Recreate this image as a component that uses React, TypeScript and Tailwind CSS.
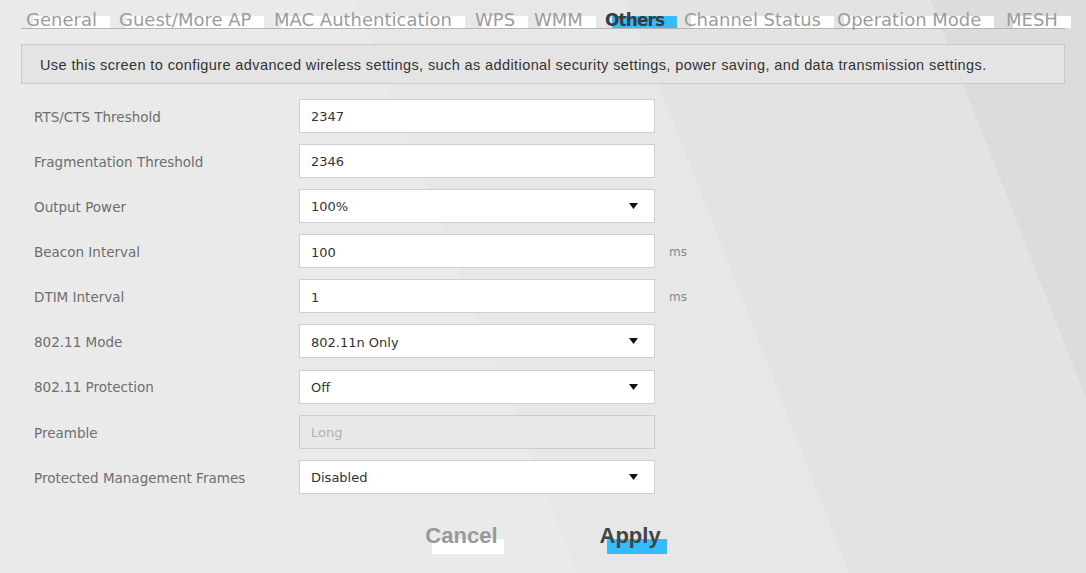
import React from "react";

type Tab = { label: string; w: string; active?: boolean };

const tabs: Tab[] = [
  { label: "General", w: "w-[93px]" },
  { label: "Guest/More AP", w: "w-[155px]" },
  { label: "MAC Authentication", w: "w-[201px]" },
  { label: "WPS", w: "w-[59px]" },
  { label: "WMM", w: "w-[71px]" },
  { label: "Others", w: "w-[79px]", active: true },
  { label: "Channel Status", w: "w-[153px]" },
  { label: "Operation Mode", w: "w-[169px]" },
  { label: "MESH", w: "w-[60px]" },
];

type Row = {
  label: string;
  value: string;
  kind: "input" | "select" | "disabled";
  unit?: string;
};

const rows: Row[] = [
  { label: "RTS/CTS Threshold", value: "2347", kind: "input" },
  { label: "Fragmentation Threshold", value: "2346", kind: "input" },
  { label: "Output Power", value: "100%", kind: "select" },
  { label: "Beacon Interval", value: "100", kind: "input", unit: "ms" },
  { label: "DTIM Interval", value: "1", kind: "input", unit: "ms" },
  { label: "802.11 Mode", value: "802.11n Only", kind: "select" },
  { label: "802.11 Protection", value: "Off", kind: "select" },
  { label: "Preamble", value: "Long", kind: "disabled" },
  { label: "Protected Management Frames", value: "Disabled", kind: "select" },
];

function Arrow() {
  return (
    <svg width="9" height="6" viewBox="0 0 9 6" className="shrink-0">
      <polygon points="0,0 9,0 4.5,6" fill="#111" />
    </svg>
  );
}

export default function App() {
  return (
    <div className="w-[1086px] h-[573px] overflow-hidden bg-[#e8e8e8] bg-[linear-gradient(68.7deg,#eaeaea_538px,#e7e7e7_538px,#e7e7e7_791px,#e3e3e3_791px,#e3e3e3_1075px,#dcdcdc_1075px)] font-['DejaVu_Sans',sans-serif]">
      <div className="px-[21px]">
        {/* Tabs */}
        <div className="flex h-[29px] border-b border-[#b5b5b5] pt-[9px] pl-[5px]">
          {tabs.map((t) => (
            <div key={t.label} className={`${t.w} shrink-0`}>
              <span
                className={
                  t.active
                    ? "relative inline-block text-[17px] leading-[18px] font-bold text-[#3a3a3a] tracking-[-0.9px]"
                    : "relative inline-block text-[18px] leading-[18px] text-[#9c9c9c]"
                }
              >
                <span
                  className={
                    t.active
                      ? "absolute left-[7px] -right-[13px] top-[5px] h-[12px] bg-[#33bcff]"
                      : "absolute left-[7px] -right-[13px] top-[5px] h-[12px] bg-white"
                  }
                />
                <span className="relative whitespace-nowrap">{t.label}</span>
              </span>
            </div>
          ))}
        </div>

        {/* Description */}
        <div className="mt-[15px] h-[40px] border border-[#c9c9c9] bg-[#e4e4e4] flex items-center pl-[18px] pt-[4px]">
          <span className="font-['Liberation_Sans',sans-serif] text-[14.5px] tracking-[0.4px] text-[#333] whitespace-nowrap">
            Use this screen to configure advanced wireless settings, such as additional security settings, power saving, and data transmission settings.
          </span>
        </div>

        {/* Form */}
        <div className="mt-[15px] flex flex-col gap-[11.1px]">
          {rows.map((r) => (
            <div key={r.label} className="flex items-center h-[34px]">
              <div className="w-[278px] shrink-0 pl-[13px] pt-[2px] text-[13.5px] text-[#6e6e6e] whitespace-nowrap">
                {r.label}
              </div>
              <div
                className={
                  r.kind === "disabled"
                    ? "w-[356px] h-[34px] shrink-0 border border-[#cccccc] bg-[#e8e8e8] flex items-center pl-[11px] pr-[16px]"
                    : "w-[356px] h-[34px] shrink-0 border border-[#cfcfcf] bg-white flex items-center pl-[11px] pr-[16px]"
                }
              >
                <span
                  className={
                    r.kind === "disabled"
                      ? "flex-1 pt-[2px] text-[13px] text-[#b0b0b0]"
                      : "flex-1 pt-[2px] text-[13px] text-[#333]"
                  }
                >
                  {r.value}
                </span>
                {r.kind === "select" && <Arrow />}
              </div>
              {r.unit && (
                <span className="ml-[14px] pt-[2px] text-[12px] text-[#888]">{r.unit}</span>
              )}
            </div>
          ))}
        </div>

        {/* Buttons */}
        <div className="mt-[30px] flex justify-center gap-[102px] font-['Liberation_Sans',sans-serif]">
          <span className="relative inline-block text-[22px] leading-[24px] font-bold text-[#999999]">
            <span className="absolute left-[7px] -right-[6px] top-[15px] h-[15px] bg-white" />
            <span className="relative">Cancel</span>
          </span>
          <span className="relative inline-block text-[22px] leading-[24px] font-bold text-[#444444]">
            <span className="absolute left-[7px] -right-[6px] top-[15px] h-[15px] bg-[#33bcff]" />
            <span className="relative">Apply</span>
          </span>
        </div>
      </div>
    </div>
  );
}
